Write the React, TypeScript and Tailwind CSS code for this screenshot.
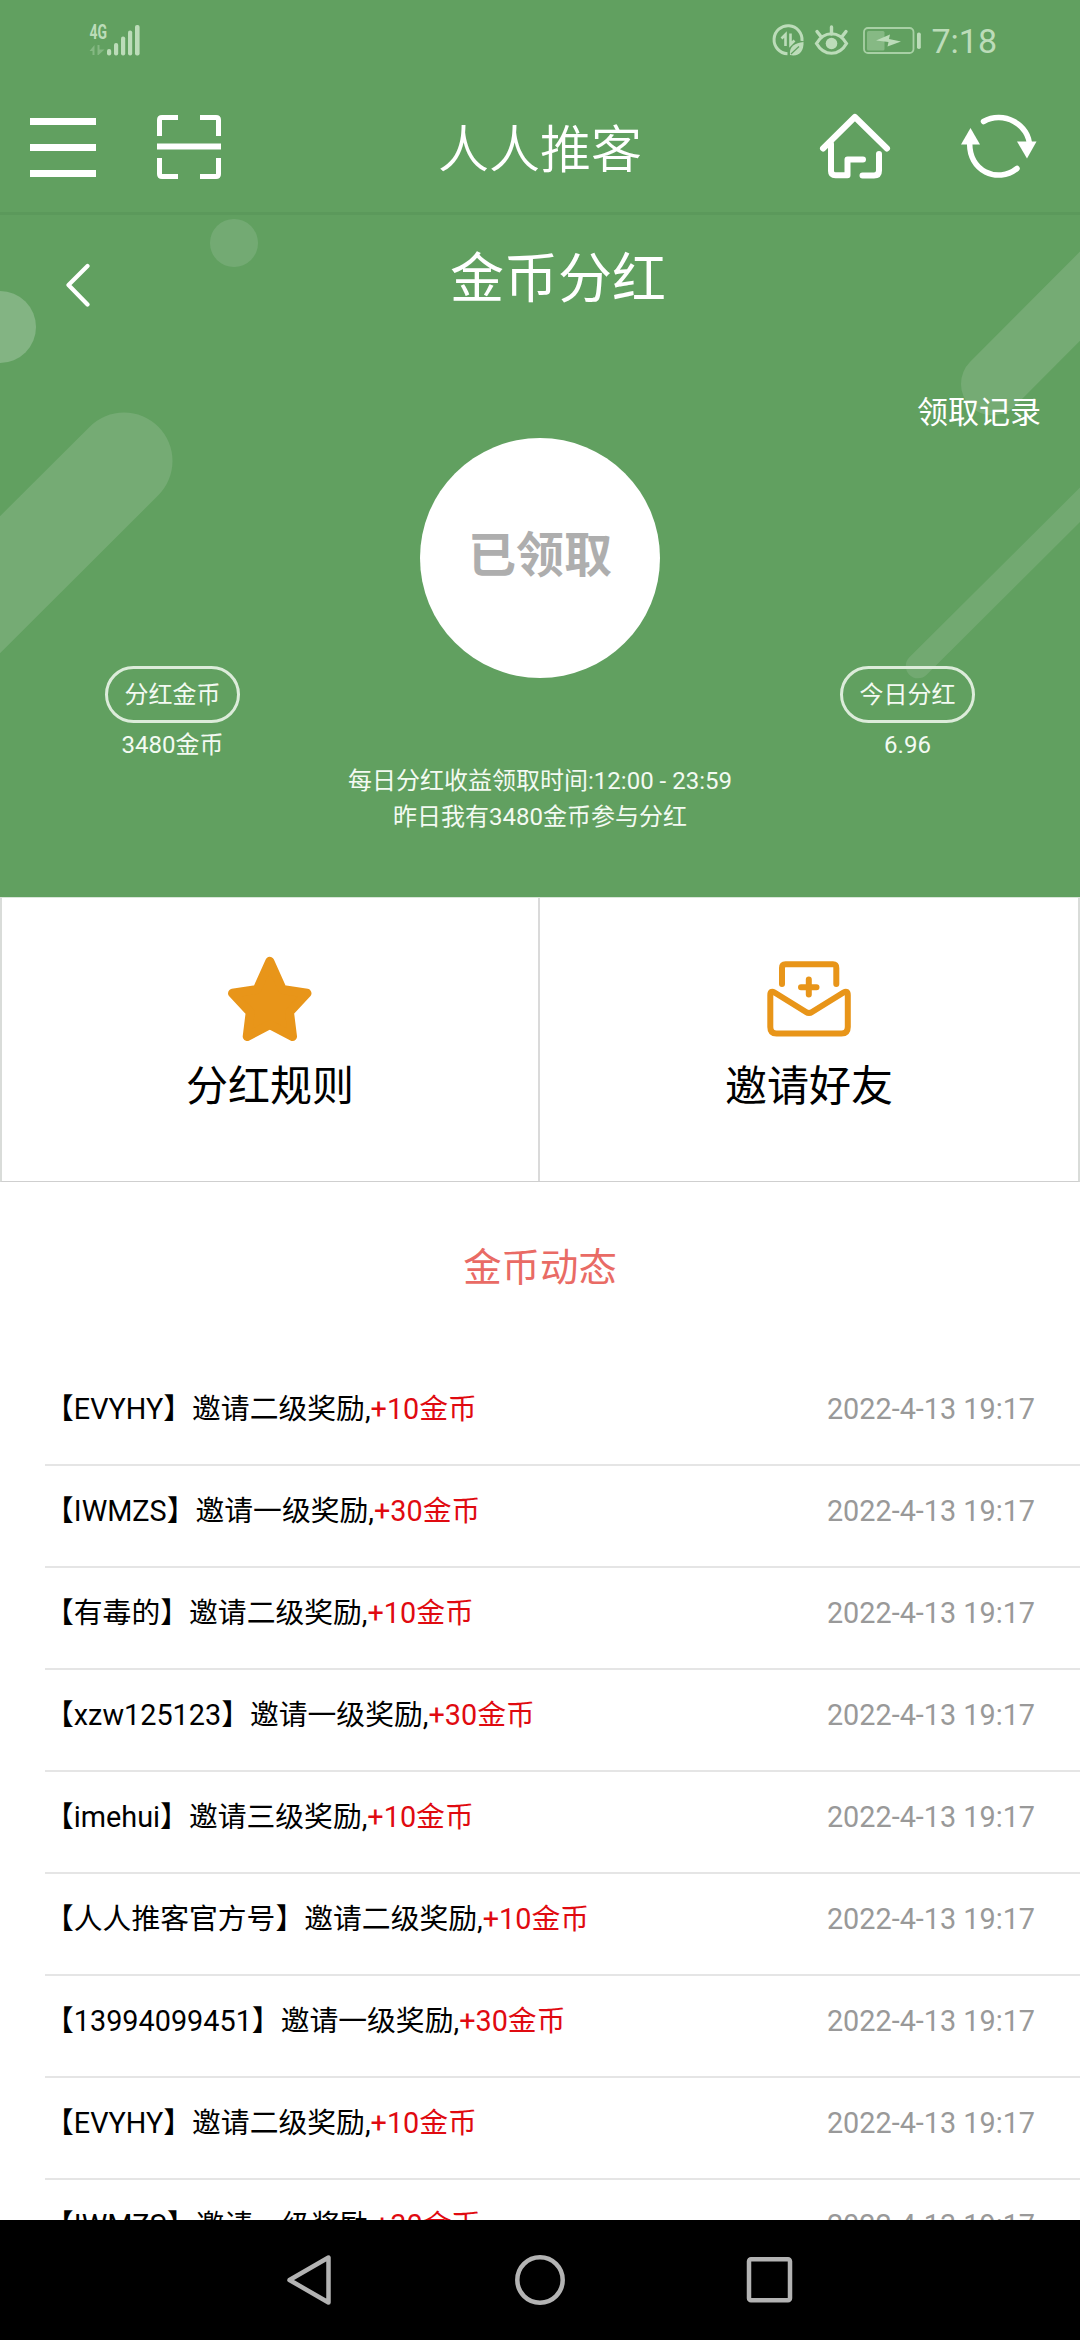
const font = "font-['Roboto','Noto_Sans_CJK_SC',sans-serif]";

type Row = { name: string; level: string; coins: number };

const rows: Row[] = [
  { name: "EVYHY", level: "二", coins: 10 },
  { name: "IWMZS", level: "一", coins: 30 },
  { name: "有毒的", level: "二", coins: 10 },
  { name: "xzw125123", level: "一", coins: 30 },
  { name: "imehui", level: "三", coins: 10 },
  { name: "人人推客官方号", level: "二", coins: 10 },
  { name: "13994099451", level: "一", coins: 30 },
  { name: "EVYHY", level: "二", coins: 10 },
  { name: "IWMZS", level: "一", coins: 30 },
];

function SignalIcon() {
  return (
    <svg width="52" height="36" viewBox="89 22 52 36" fill="#bcdcb9">
      <text x="89.5" y="38.5" fontSize="20" fontWeight="700" textLength="17.5" lengthAdjust="spacingAndGlyphs" fontFamily="Roboto">
        4G
      </text>
      <g opacity="0.4">
        <path d="M89.500 51 L94.500 45 V55 H92.500 V51Z M97.500 45 H99.500 V49.500 H104.500 L98.500 55 H97.500Z" />
      </g>
      <rect x="107" y="49" width="4.200" height="6.500" rx="2" />
      <rect x="114" y="43" width="4.200" height="12.500" rx="2" />
      <rect x="121" y="36.500" width="4.200" height="19" rx="2" />
      <rect x="128" y="30.500" width="4.200" height="25" rx="2" />
      <rect x="135" y="25" width="4.600" height="30.500" rx="2" />
    </svg>
  );
}

function StatusIcons() {
  return (
    <svg width="152" height="36" viewBox="772 22 152 36" fill="none" stroke="#bcdcb9">
      <path d="M802 41 A14 14 0 1 0 787.500 53.700" strokeWidth="3" />
      <path d="M781.500 38.500 L785.500 34.500 V46 M790.500 33.500 V44.500 L794.500 40.500" strokeWidth="2.600" />
      <path d="M790 55 C789 46 795 43 803.500 42 C804 51 799 57 790 55Z" fill="#bcdcb9" stroke="none" />
      <path d="M791 54 L799 46.500" stroke="#61a060" strokeWidth="1.200" />
      <path d="M816.500 43.500 C824 30.500 839 30.500 846.500 43.500 C839 56.500 824 56.500 816.500 43.500Z" strokeWidth="3.200" />
      <circle cx="831.500" cy="43.500" r="5.800" fill="#bcdcb9" stroke="none" />
      <path d="M831.500 27 V34 M817 31.500 L820.500 36 M846 31.500 L842.500 36" strokeWidth="3.400" strokeLinecap="round" />
      <rect x="864" y="28" width="49.500" height="25" rx="4" strokeWidth="1.800" stroke="#a8d0a5" />
      <rect x="867" y="31" width="17.500" height="19.500" rx="1.500" fill="#86b984" stroke="none" />
      <path d="M876 40.500 L890 34.500 L889 39 L901 41.500 L887.500 46.500 L888.500 42Z" fill="#bcdcb9" stroke="none" />
      <rect x="917" y="32.500" width="3.800" height="16.500" rx="1.800" fill="#bcdcb9" stroke="none" />
    </svg>
  );
}

function ScanIcon() {
  return (
    <svg width="64" height="64" viewBox="0 0 64 64" fill="none" stroke="#fff" strokeWidth="5">
      <path d="M2.500 21 V5 Q2.500 2.500 5 2.500 H21 M43 2.500 H59 Q61.500 2.500 61.500 5 V21 M61.500 43 V59 Q61.500 61.500 59 61.500 H43 M21 61.500 H5 Q2.500 61.500 2.500 59 V43" />
      <path d="M0 31.500 H64" strokeWidth="6" />
    </svg>
  );
}

function HomeIcon() {
  return (
    <svg width="72" height="70" viewBox="819 113 72 70" fill="none" stroke="#fff" strokeWidth="6" strokeLinecap="round" strokeLinejoin="round">
      <path d="M823 149.500 L854.900 118 L887 149.500" />
      <path d="M831 145 V172 Q831 176.300 835.500 176.300 H847.500 V160.500 H863" />
      <path d="M879 155 V171.500 Q879 176.500 874 176.500 H862.500" />
    </svg>
  );
}

function RefreshIcon() {
  return (
    <svg width="80" height="72" viewBox="959 112 80 72" fill="none" stroke="#fff" strokeWidth="5.500" strokeLinecap="round">
      <path d="M983.500 122.500 C1003 111.500 1030 125 1029.500 148" />
      <path d="M1017 169.500 C998 185 968 172 969.800 143" />
      <path d="M961 145.500 L970.500 129 L980 145.500Z" fill="#fff" stroke="none" />
      <path d="M1017 142.500 H1036.500 L1027 159.500Z" fill="#fff" stroke="none" />
    </svg>
  );
}

function Backdrop() {
  return (
    <svg className="absolute inset-0" width="1080" height="682" viewBox="0 215 1080 682" fill="none" strokeLinecap="round">
      <circle cx="234" cy="243" r="24" fill="#73aa73" />
      <circle cx="0" cy="327" r="36" fill="#83b483" />
      <path d="M124 461 L-60 644.500" stroke="#75ab74" strokeWidth="97" />
      <path d="M992.500 384 L1140 236" stroke="#75ab74" strokeWidth="63" />
      <path d="M918 666 L1120 465" stroke="#72a971" strokeWidth="24.500" />
    </svg>
  );
}

function StarIcon() {
  return (
    <svg width="84" height="86" viewBox="228 956 84 86" fill="#e89519" stroke="#e89519" strokeWidth="9" strokeLinejoin="round">
      <path d="M269.800 961.300 L282 988.500 Q282.500 989.500 284 989.700 L307 993.300 L290.500 1011 Q289.500 1012.300 289.700 1014 L292.500 1036.500 L272 1025.800 Q269.800 1024.800 267.600 1025.800 L247.200 1036.500 L250 1014 Q250.200 1012.300 249 1011 L232.500 993.300 L255.700 989.700 Q257 989.500 257.600 988.500 Z" />
    </svg>
  );
}

function InviteIcon() {
  return (
    <svg width="86" height="80" viewBox="767 958 86 80" fill="none" stroke="#e89519" strokeWidth="6" strokeLinecap="round" strokeLinejoin="round">
      <path d="M783 983 V967 Q783 963.300 786.500 963.300 H834 Q837.300 963.300 837.300 967 V983" />
      <path d="M809.800 978.500 V993.500 M802 986.300 H817.500" />
      <path d="M771.300 994 Q771.300 989 775.500 991.500 L807 1011 Q810 1013 813 1011 L844.500 991.500 Q848.800 989 848.800 994 V1026 Q848.800 1032.500 842.500 1032.500 H777.500 Q771.300 1032.500 771.300 1026Z" />
    </svg>
  );
}

function Stat({ label, value }: { label: string; value: string }) {
  return (
    <div className="flex w-[135px] flex-col items-center text-[24px] text-[#f3faf2]">
      <div className="flex h-[57px] w-full items-center justify-center rounded-full border-[3px] border-[#dcecda] leading-none">{label}</div>
      <div className="mt-1 leading-9 whitespace-nowrap">{value}</div>
    </div>
  );
}

export default function App() {
  return (
    <div className={`flex h-[2340px] w-[1080px] flex-col overflow-hidden bg-white text-black ${font}`}>
      <header className="h-[215px] shrink-0 border-b-[3px] border-[#5b995b] bg-[#61a060]">
        <div className="flex h-20 items-center justify-between pr-[83px] pl-[89px]">
          <SignalIcon />
          <div className="flex items-center gap-[7px]">
            <StatusIcons />
            <span className="mt-0.5 text-[34px] leading-none text-[#bcdcb9]">7:18</span>
          </div>
        </div>
        <div className="grid h-[134px] grid-cols-3 items-center">
          <div className="flex items-center gap-[61px] pl-[30px]">
            <div className="flex h-[59px] w-[66px] flex-col justify-between">
              <i className="h-[7px] bg-white" />
              <i className="h-[7px] bg-white" />
              <i className="h-[7px] bg-white" />
            </div>
            <ScanIcon />
          </div>
          <h1 className="pt-[7px] text-center text-[51px] leading-none font-[350] whitespace-nowrap text-white">人人推客</h1>
          <div className="flex items-center justify-end gap-[68px] pr-[41px]">
            <HomeIcon />
            <RefreshIcon />
          </div>
        </div>
      </header>

      <section className="relative h-[682px] shrink-0 bg-[#61a060] text-white">
        <Backdrop />
        <div className="relative flex h-[140px] items-center pb-4">
          <svg className="mt-4 ml-[65px]" width="26" height="44" viewBox="0 0 26 44" fill="none" stroke="#fff" strokeWidth="4.200" strokeLinecap="round" strokeLinejoin="round">
            <path d="M22.500 3 L3.500 22 L22.500 41.500" />
          </svg>
          <h2 className="flex-1 pt-[5px] pr-[55px] text-center text-[54px] leading-none">金币分红</h2>
        </div>
        <div className="relative mt-[38px] pr-[39px] text-right text-[31px] leading-10">领取记录</div>
        <div className="relative mx-auto mt-[5px] flex size-60 items-center justify-center rounded-full bg-white pb-1 text-[48px] font-bold text-[#aeaeae]">已领取</div>
        <div className="relative -mt-3 flex justify-between px-[105px]">
          <Stat label="分红金币" value="3480金币" />
          <Stat label="今日分红" value="6.96" />
        </div>
        <div className="relative text-center text-[24px] leading-9 text-[#f3faf2]">
          <p>每日分红收益领取时间:12:00 - 23:59</p>
          <p>昨日我有3480金币参与分红</p>
        </div>
      </section>

      <section className="grid h-[285px] shrink-0 grid-cols-2 border-x-2 border-y-1 border-t-[#d9e6d9] border-r-[#d9dcd9] border-b-[#cfcfcf] border-l-[#d9dcd9] text-[42px]">
        <div className="flex flex-col items-center border-r-2 border-[#dadada] pt-[58px]">
          <StarIcon />
          <span className="mt-[15px] leading-[60px]">分红规则</span>
        </div>
        <div className="flex flex-col items-center pt-[61px]">
          <InviteIcon />
          <span className="mt-[18px] leading-[60px]">邀请好友</span>
        </div>
      </section>

      <h3 className="mt-[57px] h-[58px] shrink-0 text-center text-[38.400px] leading-[58px] text-[#e96b65]">金币动态</h3>

      <ul className="mt-[67px] min-h-0 flex-1 overflow-hidden pl-[45px]">
        {rows.map((r, i) => (
          <li key={i} className="flex h-[102px] items-start justify-between border-b-2 border-[#e5e5e5] pt-[24px] pr-[45px] text-[28.800px] leading-[42px]">
            <span>
              【{r.name}】邀请{r.level}级奖励,<span className="text-[#e00a10]">+{r.coins}金币</span>
            </span>
            <time className="text-[#999999]">2022-4-13 19:17</time>
          </li>
        ))}
      </ul>

      <nav className="flex h-[120px] shrink-0 items-center justify-center gap-[178px] bg-black">
        <svg width="52" height="54" viewBox="0 0 52 54" fill="none" stroke="#b3b3b3" strokeWidth="4.500" strokeLinejoin="round">
          <path d="M44.500 4.500 V49.500 L5.500 27Z" />
        </svg>
        <svg width="52" height="54" viewBox="0 0 52 54" fill="none" stroke="#b3b3b3" strokeWidth="4.500">
          <circle cx="26" cy="27" r="22.700" />
        </svg>
        <svg width="52" height="54" viewBox="0 0 52 54" fill="none" stroke="#b3b3b3" strokeWidth="4.500">
          <rect x="5" y="6.200" width="41" height="41" rx="2" />
        </svg>
      </nav>
    </div>
  );
}
